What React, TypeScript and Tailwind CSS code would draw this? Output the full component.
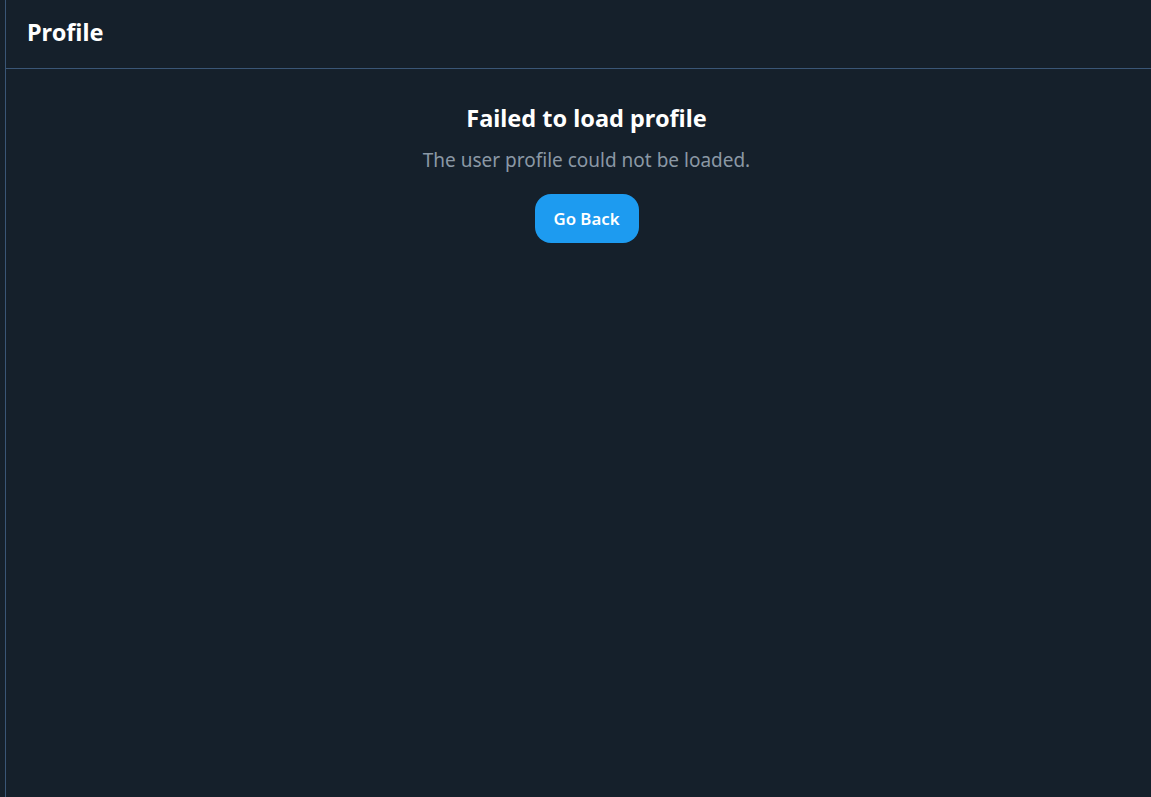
export default function App() {
  return (
    <div
      className="flex h-[797px] w-full bg-[#15202b] pl-[5px]"
      style={{ fontFamily: '"Noto Sans", "Open Sans", sans-serif' }}
    >
      <div className="flex flex-1 flex-col border-l border-[#3a5676]">
        <header className="flex h-[69px] items-center border-b border-[#3a5676] px-[21px] pb-[2px]">
          <h1 className="text-[23.5px] font-bold text-white">Profile</h1>
        </header>
        <main className="flex flex-col items-center pl-[16px] pt-[34px]">
          <h2 className="text-[23.5px] font-bold leading-[30px] text-white">
            Failed to load profile
          </h2>
          <p className="mt-[14px] text-[19px] leading-[26px] text-[#8b98a5]">
            The user profile could not be loaded.
          </p>
          <button className="mt-[21px] h-[49px] w-[104px] rounded-2xl bg-[#1d9bf0] text-[16.8px] font-semibold text-white">
            Go Back
          </button>
        </main>
      </div>
    </div>
  );
}
